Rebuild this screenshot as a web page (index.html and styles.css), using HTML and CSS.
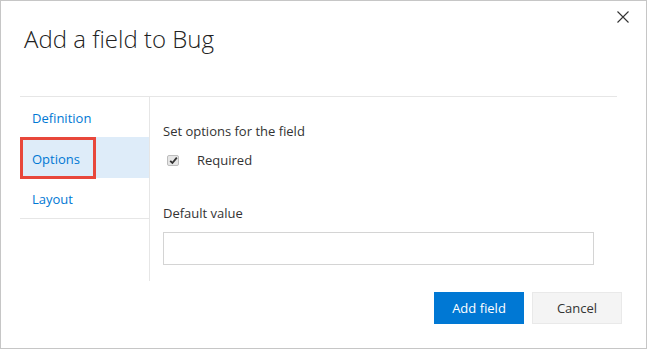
FILE: index.html
```html
<!DOCTYPE html>
<html>
<head>
<meta charset="utf-8">
<link rel="stylesheet" href="styles.css">
</head>
<body>
<div class="dialog">
  <div class="header">
    <h1 class="title">Add a field to Bug</h1>
    <button class="close" aria-label="Close">
      <svg width="12" height="12" viewBox="0 0 12 12"><path d="M0.5 0.5 L11.5 11.5 M11.5 0.5 L0.5 11.5" stroke="#333" stroke-width="1.1" fill="none"/></svg>
    </button>
  </div>
  <div class="main">
    <nav class="sidebar">
      <div class="nav-list">
        <a class="nav-item">Definition</a>
        <a class="nav-item selected">Options<span class="highlight"></span></a>
        <a class="nav-item">Layout</a>
      </div>
    </nav>
    <section class="pane">
      <div class="section-title">Set options for the field</div>
      <label class="check-row">
        <span class="checkbox">
          <svg width="9" height="9" viewBox="0 0 9 9"><path d="M1.2 4.8 L3.4 7 L7.8 1.6" stroke="#333" stroke-width="1.8" fill="none"/></svg>
        </span>
        <span class="check-label">Required</span>
      </label>
      <div class="field-label">Default value</div>
      <div class="input"></div>
    </section>
  </div>
  <div class="footer">
    <button class="btn primary">Add field</button>
    <button class="btn secondary">Cancel</button>
  </div>
</div>
</body>
</html>
```
FILE: styles.css
```css
* { box-sizing: border-box; }
html, body { margin: 0; padding: 0; background: #fff; }
body { font-family: "Segoe UI", "Open Sans", "Noto Sans", sans-serif; color: #333; }
.dialog {
  width: 647px;
  height: 349px;
  border: 1px solid #c6c6c6;
  padding-left: 19px;
  display: flex;
  flex-direction: column;
}
.header {
  height: 95px;
  display: flex;
  justify-content: space-between;
  align-items: flex-start;
}
.title {
  margin: 22px 0 0 4px;
  font-family: "Segoe UI Light", "Open Sans Light", "Noto Sans Light", "Lato Light", "Open Sans", sans-serif;
  font-size: 24px;
  font-weight: 300;
  line-height: 32px;
  color: #222;
}
.close {
  margin: 10px 17px 0 0;
  padding: 0;
  border: 0;
  background: none;
  width: 12px;
  height: 12px;
  display: flex;
}
.main {
  width: 597px;
  height: 185px;
  border-top: 1px solid #e6e6e6;
  display: flex;
}
.sidebar {
  width: 130px;
  border-right: 1px solid #e6e6e6;
}
.nav-list { border-bottom: 1px solid #e6e6e6; }
.nav-item {
  position: relative;
  display: flex;
  align-items: center;
  height: 40px;
  padding: 2px 0 0 12px;
  font-size: 13px;
  color: #0078d4;
}
.nav-item.selected { background: #deecf9; height: 41px; }
.highlight {
  position: absolute;
  left: 0; top: 0;
  width: 76px;
  height: 42px;
  border: 3px solid #e8473b;
}
.pane {
  flex: 1;
  padding: 26px 0 0 13px;
  font-size: 13px;
}
.section-title { line-height: 16px; }
.check-row {
  display: flex;
  align-items: center;
  margin-top: 13px;
  padding-left: 4px;
}
.checkbox {
  width: 12px; height: 11px;
  border: 1px solid #bdbdbd;
  background: #e6e6e6;
  border-radius: 2px;
  display: flex;
  align-items: center;
  justify-content: center;
}
.check-label { margin-left: 18px; line-height: 16px; }
.field-label { margin-top: 37px; line-height: 16px; }
.input {
  margin-top: 11px;
  width: 431px;
  height: 33px;
  border: 1px solid #d4d4d4;
}
.footer {
  display: flex;
  justify-content: flex-end;
  gap: 8px;
  padding: 11px 24px 0 0;
}
.btn {
  width: 90px;
  height: 32px;
  font-family: inherit;
  font-size: 13px;
  border: 1px solid transparent;
  padding: 0;
}
.primary { background: #0078d4; color: #fff; border-color: #0078d4; }
.secondary { background: #f4f4f4; color: #333; border-color: #e9e9e9; }
```
